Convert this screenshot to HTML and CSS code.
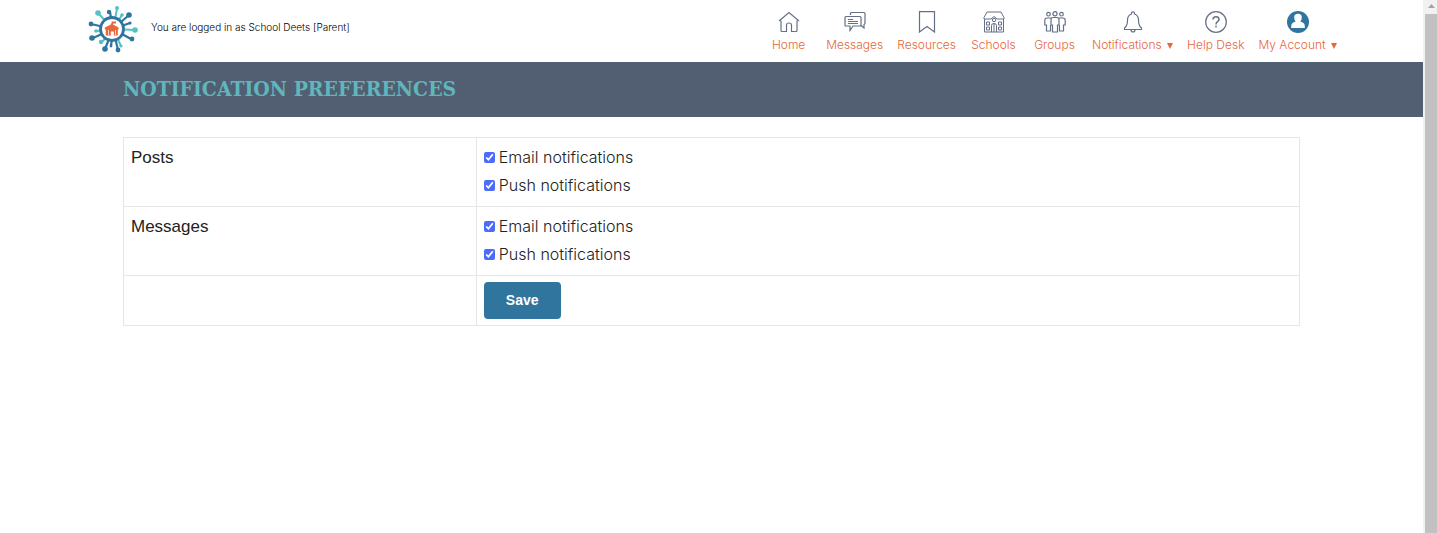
FILE: index.html
```
<!DOCTYPE html>
<html lang="en">
<head>
    <meta charset="UTF-8">
    <meta name="viewport" content="width=device-width, initial-scale=1.0">
    <title>Notification Preferences</title>
    <link rel="stylesheet" href="styles.css">
</head>
<body>
    <div class="page">
        <header class="header">
            <div class="header-inner">
                <a class="logo" href="#" aria-label="Home page">
                    <svg width="50" height="48" viewBox="0 0 50 48">
                        <g stroke="#57c0c4" fill="#57c0c4" stroke-width="2">
                            <path d="M25 23L10 7M25 23L29 3M25 23L34 9M25 23L47 24M25 23L9 25M25 23L14 36M25 23L33 40"/>
                            <circle cx="10" cy="7" r="2.8" stroke="none"/>
                            <circle cx="29" cy="2" r="2" stroke="none"/>
                            <circle cx="34" cy="9" r="1.8" stroke="none"/>
                            <circle cx="47" cy="24" r="2.8" stroke="none"/>
                            <circle cx="8" cy="25" r="1.8" stroke="none"/>
                            <circle cx="13" cy="36" r="2.2" stroke="none"/>
                            <circle cx="33" cy="40" r="1.6" stroke="none"/>
                        </g>
                        <g stroke="#2f759e" fill="#2f759e" stroke-width="2.2">
                            <path d="M25 23L22 6M25 23L41 9M25 23L42 17M25 23L3 18M25 23L5 32M25 23L17 43M25 23L23 40M25 23L30 44M25 23L43 33"/>
                            <circle cx="21" cy="6" r="2.2" stroke="none"/>
                            <circle cx="41" cy="9" r="2.8" stroke="none"/>
                            <circle cx="42" cy="17" r="1.6" stroke="none"/>
                            <circle cx="3" cy="18" r="2.4" stroke="none"/>
                            <circle cx="4" cy="32" r="2.8" stroke="none"/>
                            <circle cx="17" cy="43" r="2.8" stroke="none"/>
                            <circle cx="23" cy="40" r="1.4" stroke="none"/>
                            <circle cx="30" cy="44" r="2.4" stroke="none"/>
                            <circle cx="44" cy="33" r="2.4" stroke="none"/>
                        </g>
                        <circle cx="24" cy="23" r="11.5" fill="#fff" stroke="#2f759e" stroke-width="2.8"/>
                        <path fill="#e8663b" d="M24 15.500h4v2h-3v1l5.500 3v2h-.7v6h-4v-4h-3v4h-5v-6h-1v-2l6-3z"/>
                        <path stroke="#fff" stroke-width=".7" d="M20.500 24v5M27.500 24v5"/>
                    </svg>
                </a>
                <span class="login-info">You are logged in as School Deets [Parent]</span>
                <nav class="nav">
                    <a class="nav-item" href="#">
                        <svg class="icon" viewBox="0 0 22 22">
                            <path d="M1 10L11 1.500L21 10M3 9.500V19.500Q3 20.500 4 20.500H8.500V14Q8.500 12 11 12Q13.500 12 13.500 14V20.500H18Q19 20.500 19 19.500V9.500"/>
                        </svg>
                        Home
                    </a>
                    <a class="nav-item" href="#">
                        <svg class="icon" viewBox="0 0 22 22">
                            <path d="M6.500 4V2.500Q6.500 1.500 7.500 1.500H20Q21 1.500 21 2.500V12Q21 13 20 13.500V17L17 14.500M2 5.500H16Q17 5.500 17 6.500V14Q17 15 16 15H9L6 19.500V15H2Q1 15 1 14V6.500Q1 5.500 2 5.500zM4 8.500H9M4 10.500H14M4 12.500H14"/>
                        </svg>
                        Messages
                    </a>
                    <a class="nav-item" href="#">
                        <svg class="icon" viewBox="0 0 22 22">
                            <path d="M3.500 .7H18.500V21L11 15.500L3.500 21z"/>
                        </svg>
                        Resources
                    </a>
                    <a class="nav-item" href="#">
                        <svg class="icon icon-fine" viewBox="0 0 22 22">
                            <path d="M4 1H18L21 6.500V8H14L11 5.500L8 8H1V6.500zM1.500 8V21H20.500V8M8.500 21V14.500Q8.500 12.500 11 12.500Q13.500 12.500 13.500 14.500V21M11 13V21M3.500 11H6.500V14H3.500zM15.500 11H18.500V14H15.500zM3.500 16H6.500V19H3.500zM15.500 16H18.500V19H15.500z"/>
                            <circle cx="11" cy="9" r="1.700"/>
                        </svg>
                        Schools
                    </a>
                    <a class="nav-item" href="#">
                        <svg class="icon" viewBox="0 0 22 22">
                            <circle cx="11" cy="2.800" r="2.100"/>
                            <circle cx="4.500" cy="3.200" r="1.800"/>
                            <circle cx="17.500" cy="3.200" r="1.800"/>
                            <path d="M9 6.500H13Q15 6.500 15 9V14H13.500V21H8.500V14H7V9Q7 6.500 9 6.500zM7 7H3Q.8 7 .8 9.500V14H2.500V20H6.500V14M15 7H19Q21.200 7 21.200 9.500V14H19.500V20H15.500V14"/>
                        </svg>
                        Groups
                    </a>
                    <a class="nav-item" href="#">
                        <svg class="icon" viewBox="0 0 22 22">
                            <path d="M9.500 3V2Q9.500 .8 11 .8Q12.500 .8 12.500 2V3Q16.500 4.500 16.500 9Q16.500 15 19.500 17V18.500H2.500V17Q5.500 15 5.500 9Q5.500 4.500 9.500 3zM9 18.700Q9 21 11 21Q13 21 13 18.700"/>
                        </svg>
                        <span>Notifications <span class="arrow"></span></span>
                    </a>
                    <a class="nav-item" href="#">
                        <svg class="icon" viewBox="0 0 22 22">
                            <circle cx="11" cy="11" r="10.300"/>
                            <path stroke-width="1.500" d="M8 8.500Q8 5.700 11 5.700Q14 5.700 14 8.500Q14 9.800 12.500 10.700Q11 11.700 11 13.500M11 14.800V16.500"/>
                        </svg>
                        Help Desk
                    </a>
                    <a class="nav-item" href="#">
                        <svg class="icon" viewBox="0 0 22 22">
                            <circle cx="11" cy="11" r="11" fill="#2f759e" stroke="none"/>
                            <path fill="#fff" stroke="none" d="M11 2.800Q14.800 2.800 14.800 6.500Q14.800 9 13.300 10.500Q17.800 11.500 17.800 15V17H4.200V15Q4.200 11.500 8.700 10.500Q7.200 9 7.200 6.500Q7.200 2.800 11 2.800z"/>
                        </svg>
                        <span>My Account <span class="arrow"></span></span>
                    </a>
                </nav>
            </div>
        </header>
        <div class="title-bar">
            <h1 class="container">NOTIFICATION PREFERENCES</h1>
        </div>
        <main class="container">
            <form>
                <table class="preferences">
                    <tr>
                        <th scope="row">Posts</th>
                        <td>
                            <label><input type="checkbox" name="posts_email" checked>Email notifications</label>
                            <label><input type="checkbox" name="posts_push" checked>Push notifications</label>
                        </td>
                    </tr>
                    <tr>
                        <th scope="row">Messages</th>
                        <td>
                            <label><input type="checkbox" name="messages_email" checked>Email notifications</label>
                            <label><input type="checkbox" name="messages_push" checked>Push notifications</label>
                        </td>
                    </tr>
                    <tr>
                        <td></td>
                        <td><button type="submit">Save</button></td>
                    </tr>
                </table>
            </form>
        </main>
    </div>
    <div class="scrollbar" aria-hidden="true">
        <svg width="14" height="14" viewBox="0 0 14 14"><path fill="#a3a3a3" d="M5 8L8.500 4L12 8z"/></svg>
        <div class="scrollbar-thumb"></div>
    </div>
</body>
</html>
```

FILE: styles.css
```
* {
    box-sizing: border-box;
}

body {
    display: flex;
    min-height: 100vh;
    margin: 0;
    background-color: #fff;
    color: #222;
    font-family: Inter, "Liberation Sans", sans-serif;
    font-size: 16px;
    font-weight: 300;
}

.page {
    flex: 1;
}

.header-inner {
    display: flex;
    align-items: center;
    max-width: 1251px;
    height: 62px;
    margin: 0 auto;
}

.logo {
    display: flex;
    padding: 0 13px 2px 2px;
}

.login-info {
    padding-bottom: 8px;
    color: #000;
    font-size: 10px;
}

.nav {
    display: flex;
    gap: 14px;
    margin-left: auto;
    padding-top: 2px;
}

.nav-item {
    display: flex;
    flex-direction: column;
    align-items: center;
    gap: 4px;
    min-width: 47px;
    color: #e8663b;
    font-size: 12px;
    line-height: 16px;
    text-decoration: none;
    white-space: nowrap;
}

.icon {
    width: 22px;
    height: 22px;
    fill: none;
    stroke: #657086;
    stroke-width: 1.2;
}

.icon-fine {
    stroke-width: 1;
}

.arrow {
    display: inline-block;
    margin-left: 2px;
    border: 3px solid transparent;
    border-top: 6px solid #e8663b;
    border-bottom: 0;
}

.container {
    max-width: 1177px;
    margin: 0 auto;
}

.title-bar {
    padding: 12px 0 13px;
    background-color: #525f72;
}

.title-bar h1 {
    color: #5fb6bc;
    font-family: "DejaVu Serif Condensed", "Liberation Serif", serif;
    font-size: 21px;
    font-weight: bold;
    line-height: 30px;
}

.preferences {
    width: 100%;
    margin-top: 20px;
    border-collapse: collapse;
    table-layout: fixed;
}

.preferences th,
.preferences td {
    padding: 6px 7px;
    border: 1px solid #e6e6e6;
    line-height: 28px;
    text-align: left;
    vertical-align: top;
}

.preferences th,
.preferences td:first-child {
    width: 30%;
}

.preferences th {
    font-family: "Liberation Sans", sans-serif;
    font-size: 17px;
    font-weight: normal;
}

label {
    display: flex;
    align-items: center;
    margin-bottom: 2px;
    line-height: 26px;
}

input[type="checkbox"] {
    width: 11px;
    height: 11px;
    margin: 0 4px 0 0;
    accent-color: #4b6bfb;
}

button {
    display: block;
    height: 37px;
    padding: 0 22px 2px;
    border: none;
    border-radius: 4px;
    background-color: #2f759e;
    color: #fff;
    font-family: "Liberation Sans", sans-serif;
    font-size: 14px;
    font-weight: bold;
    cursor: pointer;
}

.scrollbar {
    display: flex;
    flex-direction: column;
    width: 14px;
    background-color: #f1f1f1;
}

.scrollbar-thumb {
    flex: 1;
    margin-left: 2px;
    background-color: #c1c1c1;
}
```
